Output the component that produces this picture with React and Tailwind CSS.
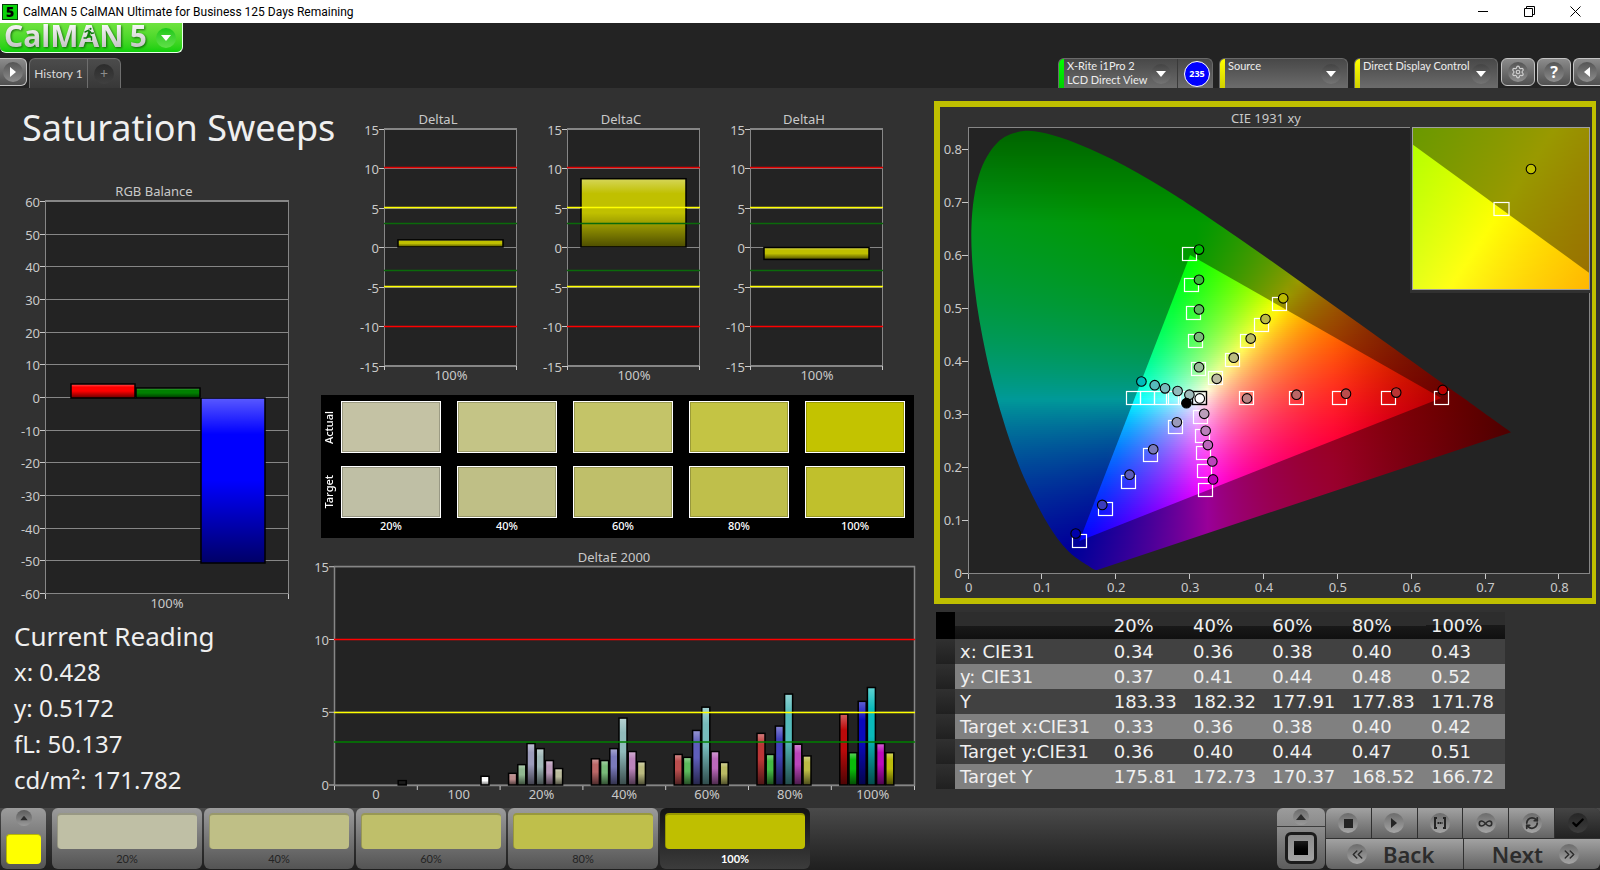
import React, { useId } from 'react';
import { Settings, RefreshCw, Check, Infinity as InfinityIcon, ChevronsLeft, ChevronsRight } from 'lucide-react';

const GRID = '#868686';
const PLOT = '#232323';
const LABEL = '#c9c9c9';

// CIE 1931 spectral locus, 380nm - 700nm
const LOCUS = [
  [0.1741, 0.005], [0.1714, 0.0051], [0.1689, 0.0069], [0.1644, 0.0109], [0.1566, 0.0177], [0.144, 0.0297],
  [0.1355, 0.0399], [0.1241, 0.0578], [0.1096, 0.0868], [0.0913, 0.1327], [0.0687, 0.2007], [0.0454, 0.295],
  [0.0235, 0.4127], [0.0082, 0.5384], [0.0039, 0.6548], [0.0139, 0.7502], [0.0389, 0.812], [0.0743, 0.8338],
  [0.1142, 0.8262], [0.1547, 0.8059], [0.1929, 0.7816], [0.2296, 0.7543], [0.2658, 0.7243], [0.3016, 0.6923],
  [0.3731, 0.6245], [0.4441, 0.5547], [0.5125, 0.4866], [0.5752, 0.4242], [0.627, 0.3725], [0.6658, 0.334],
  [0.6915, 0.3083], [0.719, 0.2809], [0.7347, 0.2653],
];

const PRIMARIES = [[0.64, 0.33], [0.3, 0.6], [0.15, 0.06]];

const TARGETS = [
  [0.299, 0.602], [0.301, 0.543], [0.304, 0.491], [0.306, 0.437], [0.31, 0.385],
  [0.333, 0.367], [0.356, 0.402], [0.377, 0.437], [0.396, 0.468], [0.42, 0.507],
  [0.376, 0.33], [0.444, 0.33], [0.502, 0.33], [0.568, 0.33], [0.64, 0.33],
  [0.223, 0.33], [0.241, 0.33], [0.26, 0.33], [0.277, 0.33], [0.293, 0.33],
  [0.279, 0.276], [0.246, 0.222], [0.216, 0.172], [0.185, 0.12], [0.149, 0.06],
  [0.313, 0.294], [0.316, 0.258], [0.317, 0.226], [0.319, 0.192], [0.32, 0.156],
];

const READINGS = [
  [0.312, 0.611, '#00bb00'], [0.312, 0.554, '#3bbb3b'], [0.312, 0.498, '#5ebb5e'], [0.312, 0.446, '#7cbb7c'], [0.312, 0.389, '#9bbb9b'],
  [0.336, 0.367, '#bbbba0'], [0.359, 0.407, '#bbbb80'], [0.382, 0.443, '#bbbb64'], [0.402, 0.48, '#bbbb45'], [0.426, 0.519, '#bbbb00'],
  [0.377, 0.33, '#bb8585'], [0.444, 0.337, '#bb6565'], [0.511, 0.339, '#bb4c4c'], [0.579, 0.341, '#bb3333'], [0.642, 0.346, '#bb0000'],
  [0.299, 0.337, '#9fbbbb'], [0.283, 0.344, '#90bbbb'], [0.266, 0.349, '#76bbbb'], [0.252, 0.355, '#55bbbb'], [0.234, 0.362, '#00bbbb'],
  [0.282, 0.285, '#9a9abb'], [0.25, 0.234, '#7a7abb'], [0.218, 0.186, '#5c5cbb'], [0.181, 0.129, '#3c3cbb'], [0.145, 0.075, '#0000aa'],
  [0.319, 0.301, '#bb9fbb'], [0.321, 0.269, '#bb80bb'], [0.324, 0.242, '#bb66bb'], [0.33, 0.211, '#bb44bb'], [0.331, 0.177, '#bb00bb'],
  [0.295, 0.321, '#000000'], [0.313, 0.33, '#ffffff'],
];

const DELTA_E = [
  { label: '0', bars: [[6, 0.3, '#1c1c1c']] },
  { label: '100', bars: [[6, 0.6, '#ffffff']] },
  { label: '20%', bars: [[0, 0.8, '#bb8c8c'], [1, 1.4, '#90b890'], [2, 2.85, '#9c9cbb'], [3, 2.5, '#a0b8b8'], [4, 1.68, '#bb9cbb'], [5, 1.13, '#bbbb9c']] },
  { label: '40%', bars: [[0, 1.8, '#bb6868'], [1, 1.68, '#78bb78'], [2, 2.5, '#7a7abb'], [3, 4.6, '#90bbbb'], [4, 2.3, '#bb84bb'], [5, 1.6, '#bbbb80']] },
  { label: '60%', bars: [[0, 2.1, '#bb4e4e'], [1, 1.9, '#5cbb5c'], [2, 3.75, '#5e5ebb'], [3, 5.35, '#76bbbb'], [4, 2.3, '#bb68bb'], [5, 1.55, '#bbbb64']] },
  { label: '80%', bars: [[0, 3.55, '#bb3636'], [1, 2.1, '#44bb44'], [2, 4.05, '#4242bb'], [3, 6.25, '#55bbbb'], [4, 2.8, '#bb44bb'], [5, 2.0, '#bbbb45']] },
  { label: '100%', bars: [[0, 4.87, '#bb0a0a'], [1, 2.22, '#0abb0a'], [2, 5.75, '#0a0abb'], [3, 6.7, '#0abbbb'], [4, 2.85, '#bb0abb'], [5, 2.22, '#bbbb0a']] },
];

const LEVELS = [
  { label: '20%', actual: '#c4c2a4', target: '#bfbfa5' },
  { label: '40%', actual: '#c4c486', target: '#bfbf86' },
  { label: '60%', actual: '#c4c468', target: '#bfbf6a' },
  { label: '80%', actual: '#c4c444', target: '#bfbf4b' },
  { label: '100%', actual: '#c3c300', target: '#c0c02c' },
];

const PATCHES = ['#bfbfa5', '#bfbf86', '#bfbf6a', '#bfbf4b', '#bfbf00'];

const TABLE = [
  ['x: CIE31', '0.34', '0.36', '0.38', '0.40', '0.43'],
  ['y: CIE31', '0.37', '0.41', '0.44', '0.48', '0.52'],
  ['Y', '183.33', '182.32', '177.91', '177.83', '171.78'],
  ['Target x:CIE31', '0.33', '0.36', '0.38', '0.40', '0.42'],
  ['Target y:CIE31', '0.36', '0.40', '0.44', '0.47', '0.51'],
  ['Target Y', '175.81', '172.73', '170.37', '168.52', '166.72'],
];

// chromaticity -> brightest displayable RGB, darker towards the ends of the locus
const xyColor = (x, y, dim) => {
  const X = x / y;
  const Z = (1 - x - y) / y;
  const rgb = [
    3.2406 * X - 1.5372 - 0.4986 * Z,
    -0.9689 * X + 1.8758 + 0.0415 * Z,
    0.0557 * X - 0.204 + 1.057 * Z,
  ].map((v) => Math.max(v, 0));
  const max = Math.max(...rgb);
  const falloff = Math.min(1, 1 - (x - 0.5) * 2.1) * Math.min(1, 1 - (y - 0.66) * 2);
  return `rgb(${rgb.map((v) => Math.round((255 * dim * falloff * v) / max)).join(' ')})`;
};

const smoothPath = (pts) => {
  let d = `M${pts[0].join(' ')}`;
  for (let i = 0; i < pts.length - 1; i++) {
    const a = pts[i - 1] || pts[i];
    const b = pts[i];
    const c = pts[i + 1];
    const e = pts[i + 2] || c;
    d += `C${b[0] + (c[0] - a[0]) / 6} ${b[1] + (c[1] - a[1]) / 6} ${c[0] - (e[0] - b[0]) / 6} ${c[1] - (e[1] - b[1]) / 6} ${c[0]} ${c[1]}`;
  }
  return `${d}Z`;
};

// Fills a rectangle of the xy plane with thin horizontal gradient strips
const ColorField = ({ box, domain, dim, step = 2, clip }) => {
  const id = useId();
  const [left, top, width, height] = box;
  const [x0, x1, y0, y1] = domain;
  const rows = Math.ceil(height / step);
  const stops = 48;
  return (
    <g clipPath={clip}>
      {Array.from({ length: rows }, (_, r) => {
        const y = y1 - ((r + 0.5) / rows) * (y1 - y0);
        return (
          <g key={r}>
            <linearGradient id={`${id}${r}`}>
              {Array.from({ length: stops + 1 }, (_, s) => (
                <stop key={s} offset={s / stops} stopColor={xyColor(x0 + (s / stops) * (x1 - x0), Math.max(y, 0.002), dim)} />
              ))}
            </linearGradient>
            <rect x={left} y={top + r * step} width={width} height={Math.min(step, height - r * step)} fill={`url(#${id}${r})`} shapeRendering="crispEdges" />
          </g>
        );
      })}
    </g>
  );
};

const Shine = ({ id }) => (
  <linearGradient id={id} x1="0" y1="0" x2="0" y2="1">
    <stop offset="0" stopColor="#fff" stopOpacity="0.35" />
    <stop offset="0.22" stopColor="#fff" stopOpacity="0" />
    <stop offset="0.5" stopColor="#000" stopOpacity="0" />
    <stop offset="1" stopColor="#000" stopOpacity="0.6" />
  </linearGradient>
);

const Bar = ({ x, y, width, height, color, shine }) => (
  <g>
    <rect x={x} y={y} width={width} height={height} fill={color} />
    <rect x={x} y={y} width={width} height={height} fill={`url(#${shine})`} stroke="#000" strokeWidth="1.5" />
  </g>
);

const ChartText = ({ children, ...props }) => (
  <text fill={LABEL} className="text-[13px]" {...props}>{children}</text>
);

const RgbBalance = () => {
  const shine = useId();
  const y = (v) => Math.round(217 - v * 3.265) + 0.5;
  const ticks = [60, 50, 40, 30, 20, 10, 0, -10, -20, -30, -40, -50, -60];
  return (
    <svg viewBox="0 0 312 432" className="block w-full" role="img" aria-label="RGB Balance chart">
      <defs><Shine id={shine} /></defs>
      <ChartText x="154" y="16" textAnchor="middle">RGB Balance</ChartText>
      <rect x="45.5" y="20.5" width="243" height="393" fill={PLOT} stroke={GRID} />
      {ticks.map((t) => (
        <g key={t}>
          <line x1="46" x2="288" y1={y(t)} y2={y(t)} stroke={GRID} />
          <line x1="40" x2="45" y1={y(t)} y2={y(t)} stroke={LABEL} />
          <ChartText x="40" y={y(t) + 5} textAnchor="end">{t}</ChartText>
        </g>
      ))}
      <path d="M45.5 414v5M288.5 414v5" stroke={LABEL} />
      <Bar x={71} y={204} width={64} height={14} color="#ff0000" shine={shine} />
      <Bar x={136} y={208} width={64} height={10} color="#008000" shine={shine} />
      <Bar x={201} y={218} width={64} height={165} color="#0000ff" shine={shine} />
      <ChartText x="167" y="428" textAnchor="middle">100%</ChartText>
    </svg>
  );
};

const DeltaChart = ({ title, value }) => {
  const shine = useId();
  const y = (v) => Math.round(139 - v * 7.9) + 0.5;
  const limits = [[10, '#e00000'], [5, '#ffff00'], [3, '#0a6a0a'], [-3, '#0a6a0a'], [-5, '#ffff00'], [-10, '#ff0000']];
  const height = Math.abs(value) * 7.94;
  return (
    <svg viewBox="0 0 183 280" className="block min-w-0 flex-1" role="img" aria-label={`${title} chart`}>
      <defs><Shine id={shine} /></defs>
      <ChartText x="86" y="16" textAnchor="middle">{title}</ChartText>
      <rect x="32.5" y="20.5" width="132" height="237" fill={PLOT} stroke={GRID} />
      {[15, 10, 5, 0, -5, -10, -15].map((t) => (
        <g key={t}>
          <line x1="33" x2="164" y1={y(t)} y2={y(t)} stroke={GRID} />
          <line x1="27" x2="32" y1={y(t)} y2={y(t)} stroke={LABEL} />
          <ChartText x="27" y={y(t) + 5} textAnchor="end">{t}</ChartText>
        </g>
      ))}
      <path d="M32.5 258v4M164.5 258v4" stroke={LABEL} />
      <Bar x={46} y={value > 0 ? 139 - height : 139.5} width={105} height={height} color="#c0c000" shine={shine} />
      {limits.map(([v, color]) => (
        <line key={v} x1="32" x2="165" y1={Math.round(138.6 - v * 7.94) + 0.5} y2={Math.round(138.6 - v * 7.94) + 0.5} stroke={color} strokeWidth="1.5" />
      ))}
      <ChartText x="99" y="272" textAnchor="middle">100%</ChartText>
    </svg>
  );
};

const DeltaE = () => {
  const shine = useId();
  const y = (v) => 240 - v * 14.55;
  const slot = 82.8;
  return (
    <svg viewBox="0 0 609 258" className="block w-full" role="img" aria-label="DeltaE 2000 chart">
      <defs><Shine id={shine} /></defs>
      <ChartText x="302" y="17" textAnchor="middle">DeltaE 2000</ChartText>
      <rect x="22.5" y="21.5" width="580" height="219" fill={PLOT} stroke={GRID} strokeWidth="1.5" />
      {[15, 10, 5, 0].map((t) => (
        <g key={t}>
          <line x1="23" x2="602" y1={y(t)} y2={y(t)} stroke={GRID} />
          <line x1="17" x2="22" y1={y(t)} y2={y(t)} stroke={LABEL} />
          <ChartText x="17" y={y(t) + 5} textAnchor="end">{t}</ChartText>
        </g>
      ))}
      {DELTA_E.map((group, i) => (
        <g key={group.label}>
          <line x1={22.5 + i * slot} x2={22.5 + i * slot} y1="241" y2="245" stroke={LABEL} />
          {group.bars.map(([pos, v, color]) => (
            <Bar key={pos} x={31 + i * slot + pos * 9.2} y={y(v)} width={8} height={240 - y(v)} color={color} shine={shine} />
          ))}
          <ChartText x={22.5 + (i + 0.5) * slot} y="254" textAnchor="middle">{group.label}</ChartText>
        </g>
      ))}
      <line x1="602.5" x2="602.5" y1="241" y2="245" stroke={LABEL} />
      <line x1="22" x2="603" y1="94.5" y2="94.5" stroke="#ff0000" strokeWidth="1.5" />
      <line x1="22" x2="603" y1="167.5" y2="167.5" stroke="#ffff00" strokeWidth="1.5" />
      <line x1="22" x2="603" y1="197" y2="197" stroke="#008000" strokeOpacity="0.75" strokeWidth="2" />
    </svg>
  );
};

const CieChart = () => {
  const id = useId();
  const px = (x) => 28.6 + x * 738.5;
  const py = (y) => 465.7 - y * 529.6;
  const locus = smoothPath(LOCUS.map(([x, y]) => [px(x), py(y)]));
  const triangle = PRIMARIES.map(([x, y]) => `${px(x)},${py(y)}`).join(' ');
  const box = [px(0), py(0.84), 0.74 * 738.5, 0.84 * 529.6];
  const domain = [0, 0.74, 0, 0.84];
  // the inset magnifies the current target
  const inset = [473, 21, 177, 162];
  const insetDomain = [0.3943, 0.4443, 0.4803, 0.5303];
  const iy = (y) => 183 - (y - 0.4803) * 3240;
  return (
    <svg viewBox="0 0 652 491" className="block w-full" role="img" aria-label="CIE 1931 xy chart">
      <defs>
        <clipPath id={`${id}l`}><path d={locus} /></clipPath>
        <clipPath id={`${id}t`}><polygon points={triangle} /></clipPath>
        <clipPath id={`${id}i`}>
          <polygon points={`473,${iy(0.6 - 0.0943 * 0.79412)} 650,${iy(0.6 - 0.1443 * 0.79412)} 650,183 473,183`} />
        </clipPath>
      </defs>
      <ChartText x="326" y="16" textAnchor="middle">CIE 1931 xy</ChartText>
      <rect x="28.5" y="20.5" width="621" height="446" fill={PLOT} stroke={GRID} />
      <ColorField box={box} domain={domain} dim={0.6} clip={`url(#${id}l)`} />
      <ColorField box={box} domain={domain} dim={1} clip={`url(#${id}t)`} />
      {[0, 0.1, 0.2, 0.3, 0.4, 0.5, 0.6, 0.7, 0.8].map((t) => (
        <g key={t} stroke={LABEL}>
          <path d={`M22 ${Math.round(py(t)) + 0.5}h6M${Math.round(px(t)) - 0.5} 467v5`} />
          <ChartText x="22" y={py(t) + 5} textAnchor="end" stroke="none">{t}</ChartText>
          <ChartText x={px(t)} y="485" textAnchor="middle" stroke="none">{t}</ChartText>
        </g>
      ))}
      {TARGETS.map(([x, y]) => (
        <rect key={`${x}-${y}`} x={Math.round(px(x)) - 6.5} y={Math.round(py(y)) - 6.5} width="14" height="13" fill="none" stroke="#fff" strokeWidth="1.2" />
      ))}
      <rect x={Math.round(px(0.312)) - 6.5} y={Math.round(py(0.33)) - 6.5} width="14" height="13" fill="#fff" fillOpacity="0.6" stroke="#000" strokeWidth="1.4" />
      {READINGS.map(([x, y, color]) => (
        <circle key={`${x}-${y}`} cx={px(x)} cy={py(y) + 0.5} r="4.8" fill={color} stroke="#000" strokeWidth="1.1" />
      ))}
      <rect x="470" y="18" width="182" height="168" fill="#313131" />
      <ColorField box={inset} domain={insetDomain} dim={0.6} />
      <ColorField box={inset} domain={insetDomain} dim={1} clip={`url(#${id}i)`} />
      <rect x="472.5" y="20.5" width="177" height="162" fill="none" stroke="#a0a0a0" />
      <rect x="554" y="95.5" width="15" height="13" fill="none" stroke="#fff" strokeWidth="1.2" />
      <circle cx="591" cy="62" r="4.8" fill="#c0c000" stroke="#000" strokeWidth="1.1" />
    </svg>
  );
};

const Triangle = ({ dir = 'down', className = 'fill-white' }) => {
  const d = { down: 'M0 2h10L5 8z', up: 'M0 8h10L5 2z', right: 'M2 0v10l6-5z', left: 'M8 0v10L2 5z' }[dir];
  return <svg viewBox="0 0 10 10" className={`size-2.5 ${className}`}><path d={d} /></svg>;
};

const Knob = ({ children, className = 'size-5 from-[#4a4a4a] to-[#7c7c7c]' }) => (
  <span className={`flex shrink-0 items-center justify-center rounded-full bg-linear-to-b ${className}`}>{children}</span>
);

const DeviceMenu = ({ lines, bar, width, children }) => (
  <div className={`flex h-[30px] overflow-hidden rounded-t-md border border-b-0 border-[#6a6a6a] bg-linear-to-b from-[#484848] to-[#6c6c6c] ${width}`}>
    <span className={`w-[5px] shrink-0 bg-linear-to-b ${bar}`} />
    <button type="button" className="flex min-w-0 flex-1 items-start justify-between pr-1.5 pl-[3px] text-left font-['Lato',sans-serif] text-[11px] leading-[14px] text-[#ededed]">
      <span className="whitespace-nowrap">{lines.map((l) => <span key={l} className="block">{l}</span>)}</span>
      <Knob className="mt-[5px] -ml-1 size-5 from-[#444] to-[#747474]"><Triangle /></Knob>
    </button>
    {children}
  </div>
);

const ToolButton = ({ label, className = 'w-[34px] rounded-md', children }) => (
  <button type="button" aria-label={label} className={`flex h-7 items-center justify-center border border-[#c4c4c4] bg-linear-to-b from-[#8c8c8c] to-[#505050] ${className}`}>
    <Knob className="size-5 from-[#555] to-[#8e8e8e]">{children}</Knob>
  </button>
);

const TitleBar = () => (
  <div className="flex h-[23px] items-center bg-white text-black">
    <span className="ml-0.5 flex size-4 items-center justify-center border border-[#06400a] bg-[#0bd40b] text-sm leading-none font-black">5</span>
    <span className="ml-[5px] text-xs font-['Roboto',sans-serif]">CalMAN 5 CalMAN Ultimate for Business 125 Days Remaining</span>
    <div className="mr-0.5 ml-auto flex">
      <button type="button" aria-label="Minimize" className="flex w-[46px] justify-center">
        <svg viewBox="0 0 11 11" className="size-[11px]" fill="none" stroke="#000"><path d="M0 5.5h10" /></svg>
      </button>
      <button type="button" aria-label="Restore" className="flex w-[46px] justify-center">
        <svg viewBox="0 0 11 11" className="size-[11px]" fill="none" stroke="#000"><path d="M.5 2.5h8v8h-8zM2.5 2.5v-2h8v8h-2" /></svg>
      </button>
      <button type="button" aria-label="Close" className="flex w-[46px] justify-center">
        <svg viewBox="0 0 11 11" className="size-[11px]" fill="none" stroke="#000"><path d="M.5.5l10 10M10.5.5l-10 10" /></svg>
      </button>
    </div>
  </div>
);

const Logo = () => (
  <button type="button" aria-label="CalMAN 5 menu" className="relative flex h-[30px] w-[183px] items-center justify-between rounded-b-md border-r border-b border-[#e8ffe8] bg-linear-to-b from-[#6fe33f] to-[#08cf08] pr-1.5 pl-1">
    <span className="flex items-baseline gap-1.5 pb-1 text-[30px] leading-none font-bold drop-shadow-[1px_1px_1px_rgba(0,60,0,0.7)]">
      <span className="bg-linear-to-b from-white to-[#bdbdbd] bg-clip-text text-transparent">CalMAN</span>
      <span className="bg-linear-to-b from-white to-[#bdbdbd] bg-clip-text text-transparent">5</span>
    </span>
    <svg viewBox="0 0 12 14" className="absolute top-1 left-[83px] h-3.5 w-3" fill="none" stroke="#0c7a0c" strokeWidth="1.4" strokeLinecap="round">
      <circle cx="7.5" cy="1.8" r="1.1" fill="#0c7a0c" stroke="none" />
      <path d="M2 5l3-1.5 2 1-1.5 4 3 1.500v3M5.500 8.500L3.500 11H1M7 4.500L8.500 6.500l2-.5" />
    </svg>
    <Knob className="size-5 from-[#16c816] to-[#5fe048]"><Triangle /></Knob>
  </button>
);

const Toolbar = () => (
  <div className="mt-[5px] flex items-start justify-between">
    <div className="flex gap-0.5">
      <ToolButton label="Expand" className="w-[27px] rounded-r-md border-l-0"><Triangle dir="right" /></ToolButton>
      <div className="flex h-[30px] rounded-t-md border border-b-0 border-[#6e6e6e] bg-linear-to-b from-[#4c4c4c] to-[#383838]">
        <button type="button" className="w-[58px] border-r border-[#6e6e6e] font-['Lato',sans-serif] text-xs text-[#dadada]">History 1</button>
        <button type="button" aria-label="Add history" className="flex w-8 items-center justify-center text-sm text-[#8c8c8c]">
          <Knob className="size-5 from-[#2c2c2c] to-[#404040]">+</Knob>
        </button>
      </div>
    </div>
    <div className="flex items-start">
      <DeviceMenu lines={['X-Rite i1Pro 2', 'LCD Direct View']} bar="from-[#00ff00] to-[#00d000]" width="w-[155px]">
        <div className="flex w-[35px] items-center justify-end border-l border-[#3a3a3a] pr-0.5">
          <button type="button" className="size-[26px] rounded-full border border-white bg-[#0000ff] text-[9px] font-bold text-white">235</button>
        </div>
      </DeviceMenu>
      <div className="ml-1.5 flex gap-1.5">
        <DeviceMenu lines={['Source']} bar="from-[#ffff00] to-[#d0d000]" width="w-[129px]" />
        <DeviceMenu lines={['Direct Display Control']} bar="from-[#ffff00] to-[#d0d000]" width="w-[144px]" />
      </div>
      <div className="ml-[3px] flex gap-0.5">
        <ToolButton label="Settings"><Settings size={14} className="text-[#cfcfcf]" /></ToolButton>
        <ToolButton label="Help"><span className="text-base leading-none font-bold text-white">?</span></ToolButton>
        <ToolButton label="Collapse" className="w-[27px] rounded-l-md border-r-0"><Triangle dir="left" /></ToolButton>
      </div>
    </div>
  </div>
);

const SwatchPanel = () => (
  <div className="mt-[7px] mr-[7px] ml-[9px] grid grid-cols-[20px_repeat(5,minmax(0,1fr))] bg-black pt-1.5 pr-[9px] pb-1 text-[11px] font-medium text-white">
    {['Actual', 'Target'].map((name) => (
      <React.Fragment key={name}>
        <div className={`flex items-center justify-center pr-1 ${name === 'Actual' ? 'mb-[13px]' : ''}`}>
          <span className="rotate-180 [writing-mode:vertical-rl]">{name}</span>
        </div>
        <div className={`col-span-5 grid grid-cols-5 gap-4 ${name === 'Actual' ? 'mb-[13px]' : ''}`}>
          {LEVELS.map((l) => (
            <div key={l.label} className="h-[52px] border border-white" style={{ backgroundColor: name === 'Actual' ? l.actual : l.target }}>
              <div className="h-full border border-black/20" />
            </div>
          ))}
        </div>
      </React.Fragment>
    ))}
    <div className="col-span-5 col-start-2 grid grid-cols-5 gap-4 text-center leading-4">
      {LEVELS.map((l) => <span key={l.label}>{l.label}</span>)}
    </div>
  </div>
);

const DataTable = () => (
  <table className="mt-2 ml-0.5 w-[86%] table-fixed border-collapse text-left font-['DejaVu_Sans',sans-serif] text-lg leading-[25px] text-[#f0f0f0]">
    <colgroup>
      <col className="w-[19px]" />
      <col className="w-[27%]" />
      <col /><col /><col /><col /><col />
    </colgroup>
    <thead>
      <tr className="h-[27px] bg-[linear-gradient(#2d2d2d_50%,#191919_50%,#101010)]">
        <td className="bg-black" />
        <td />
        {LEVELS.map((l) => <th key={l.label} scope="col" className="p-0 pl-[5px] font-normal">{l.label}</th>)}
      </tr>
    </thead>
    <tbody>
      {TABLE.map(([name, ...values], i) => (
        <tr key={name} className={`h-[25px] ${i % 2 ? 'bg-[#808080]' : 'bg-[#414141]'}`}>
          <td className="bg-linear-to-b from-[#303030] to-[#202020] p-0" />
          <th scope="row" className="p-0 pl-[5px] font-normal whitespace-nowrap">{name}</th>
          {values.map((v, j) => <td key={j} className="p-0 pl-[5px]">{v}</td>)}
        </tr>
      ))}
    </tbody>
  </table>
);

const ControlButton = ({ label, disabled, children }) => (
  <button type="button" aria-label={label} disabled={disabled} className={`flex h-[30px] flex-1 items-center justify-center bg-linear-to-b ${disabled ? 'from-[#454545] to-[#222] text-black' : 'from-[#a2a2a2] to-[#636363] text-[#2c2c2c]'}`}>
    <Knob className={disabled ? 'size-5 from-[#262626] to-[#3c3c3c]' : 'size-5 from-[#6c6c6c] to-[#a6a6a6]'}>{children}</Knob>
  </button>
);

const BottomBar = () => (
  <footer className="flex h-[62px] items-start justify-between bg-linear-to-b from-[#4a4a4a] to-[#1f1f1f] pl-px">
    <div className="flex gap-0.5">
      <button type="button" aria-label="Current color" className="mr-1 flex h-[61px] w-[45px] flex-col items-center rounded-md bg-linear-to-b from-[#9c9c9c] to-[#545454] pt-0.5">
        <Knob className="size-4 from-[#5c5c5c] to-[#9a9a9a]"><Triangle dir="up" className="scale-75 fill-[#2c2c2c]" /></Knob>
        <span className="mt-2 h-[30px] w-[35px] rounded border-t border-l border-[#b8b800] bg-[#ffff00]" />
      </button>
      {PATCHES.map((color, i) => (
        <button key={color} type="button" aria-pressed={i === 4} className={`flex h-[61px] w-[150px] flex-col items-center rounded-md bg-linear-to-b pt-[5px] font-['Lato',sans-serif] text-[11px] leading-5 ${i === 4 ? 'from-[#141414] to-[#3c3c3c] font-bold text-white' : 'from-[#9c9c9c] to-[#545454] text-[#242424]'}`}>
          <span className="h-9 w-[140px] rounded border-t-2 border-l border-black/20" style={{ backgroundColor: color }} />
          {LEVELS[i].label}
        </button>
      ))}
    </div>
    <div className="flex gap-px">
      <div className="flex w-12 flex-col gap-px overflow-hidden rounded-md">
        <button type="button" aria-label="More" className="flex h-[18px] items-center justify-center bg-linear-to-b from-[#9c9c9c] to-[#8a8a8a]">
          <Knob className="size-4 from-[#6c6c6c] to-[#9a9a9a]"><Triangle dir="up" className="fill-[#2c2c2c]" /></Knob>
        </button>
        <button type="button" aria-label="Stop all" className="flex h-[42px] items-center justify-center bg-linear-to-b from-[#8c8c8c] to-[#5c5c5c]">
          <span className="flex size-8 items-center justify-center rounded-md border-3 border-[#1c1c1c] bg-linear-to-b from-[#8c8c8c] to-[#a4a4a4]">
            <span className="size-3.5 bg-linear-to-b from-[#1c1c1c] to-black" />
          </span>
        </button>
      </div>
      <div className="flex w-[274px] flex-col gap-px overflow-hidden rounded-md bg-[#303030]">
        <div className="flex gap-px">
          <ControlButton label="Stop"><span className="size-[9px] bg-[#242424]" /></ControlButton>
          <ControlButton label="Play"><Triangle dir="right" className="fill-[#242424]" /></ControlButton>
          <ControlButton label="Read range">
            <svg viewBox="0 0 14 12" className="h-3 w-3.5" fill="none" stroke="#242424" strokeWidth="2"><path d="M4 1H2v10h2M10 1h2v10h-2" /><path d="M4.500 6h5" strokeDasharray="1.500 .5" /></svg>
          </ControlButton>
          <ControlButton label="Read continuously"><InfinityIcon size={15} strokeWidth={2.5} /></ControlButton>
          <ControlButton label="Refresh"><RefreshCw size={14} strokeWidth={3} /></ControlButton>
          <ControlButton label="Accept" disabled><Check size={14} strokeWidth={4} /></ControlButton>
        </div>
        <div className="flex gap-px text-[22px] leading-none font-semibold text-[#2c2c2c]">
          <button type="button" className="flex h-[30px] flex-1 items-center gap-4 bg-linear-to-b from-[#a2a2a2] to-[#636363] pl-[21px]">
            <Knob className="size-5 from-[#6c6c6c] to-[#a6a6a6]"><ChevronsLeft size={17} /></Knob>
            Back
          </button>
          <button type="button" className="flex h-[30px] flex-1 items-center justify-end gap-4 bg-linear-to-b from-[#a2a2a2] to-[#636363] pr-[21px]">
            Next
            <Knob className="size-5 from-[#6c6c6c] to-[#a6a6a6]"><ChevronsRight size={17} /></Knob>
          </button>
        </div>
      </div>
    </div>
  </footer>
);

const App = () => (
  <div className="flex min-h-screen flex-col bg-[#232323] font-['Noto_Sans',sans-serif]">
    <TitleBar />
    <Logo />
    <Toolbar />
    <main className="grid flex-1 grid-cols-[312fr_609fr_679fr] items-start bg-[#313131] text-[#efefef]">
      <section className="min-w-0 pt-5">
        <h1 className="mb-8 ml-[22px] text-4xl leading-10 whitespace-nowrap">Saturation Sweeps</h1>
        <RgbBalance />
        <div className="pt-1.5 pl-3.5 text-2xl leading-9">
          <h2 className="text-[26px] leading-9">Current Reading</h2>
          <p>x: 0.428</p>
          <p>y: 0.5172</p>
          <p>fL: 50.137</p>
          <p>cd/m²: 171.782</p>
        </div>
      </section>
      <section className="min-w-0 pt-5">
        <div className="flex pr-5 pl-10">
          <DeltaChart title="DeltaL" value={0.9} />
          <DeltaChart title="DeltaC" value={8.6} />
          <DeltaChart title="DeltaH" value={-1.5} />
        </div>
        <SwatchPanel />
        <div className="mt-[7px]"><DeltaE /></div>
      </section>
      <section className="min-w-0 pt-[13px] pr-1 pl-[13px]">
        <div className="border-6 border-r-4 border-[#bfbf00]"><CieChart /></div>
        <DataTable />
      </section>
    </main>
    <BottomBar />
  </div>
);

export default App;
